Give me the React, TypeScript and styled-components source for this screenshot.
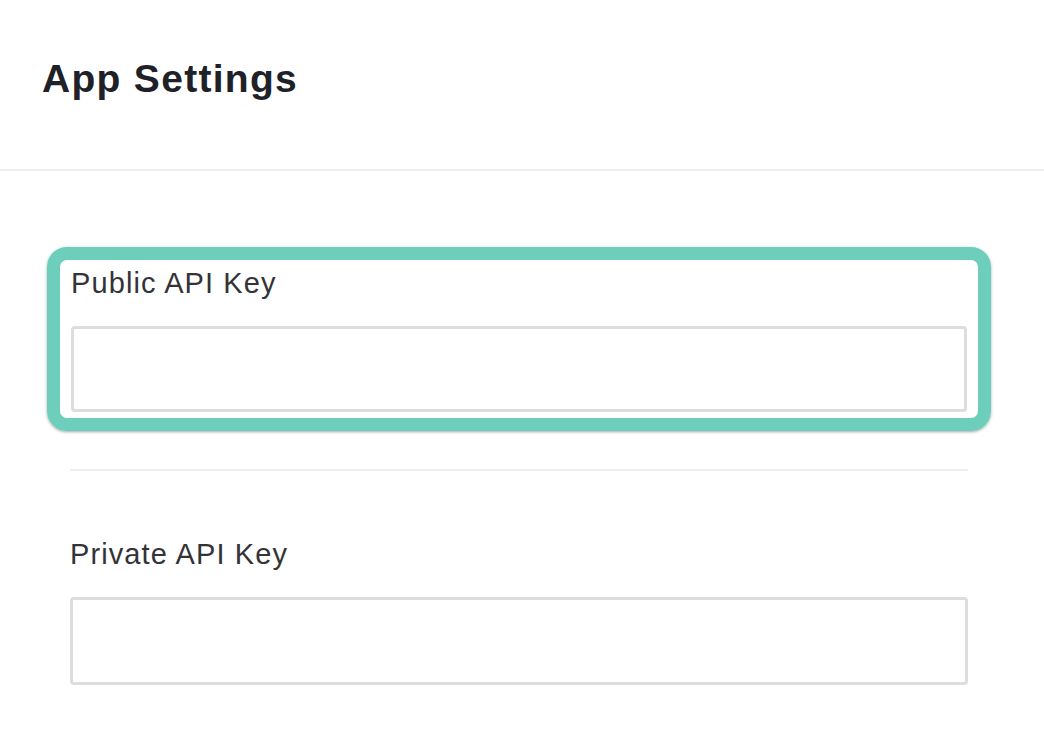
import React from "react";
import styled, { createGlobalStyle } from "styled-components";

const GlobalStyle = createGlobalStyle`
  html, body {
    margin: 0;
    padding: 0;
    background: #ffffff;
    font-family: "Liberation Sans", Arial, sans-serif;
  }
`;

const Page = styled.div`
  width: 1044px;
  min-height: 736px;
  background: #fff;
`;

const Header = styled.header`
  height: 171px;
  box-sizing: border-box;
  padding: 54px 0 0 42px;
  border-bottom: 2px solid #eeeeee;
`;

const Title = styled.h1`
  margin: 0;
  font-size: 39px;
  line-height: 50px;
  font-weight: 700;
  letter-spacing: 1.3px;
  color: #1f2128;
`;

const Content = styled.main`
  padding: 76px 76px 0 70px;
  display: flex;
  flex-direction: column;
`;

const Field = styled.div<{ $focused?: boolean }>`
  display: flex;
  flex-direction: column;
  gap: 26px;
  ${(p) =>
    p.$focused
      ? `
    margin: 0 -23px;
    padding: 6px 11px 6px 11px;
    border: 13px solid #6dcfbb;
    border-radius: 20px;
    box-shadow: 0 1px 3px rgba(0, 0, 0, 0.35);
  `
      : `
    padding: 0;
  `}
`;

const Label = styled.label`
  font-size: 29px;
  line-height: 34px;
  letter-spacing: 1.1px;
  color: #333338;
`;

const Input = styled.input<{ $tall?: boolean }>`
  box-sizing: border-box;
  width: 100%;
  height: ${(p) => (p.$tall ? "88px" : "86px")};
  border: 3px solid #dddddd;
  border-radius: 4px;
  background: #fff;
  outline: none;
  font-size: 28px;
  padding: 0 18px;
  font-family: inherit;
`;

const Divider = styled.hr`
  margin: 38px 0 66px;
  border: none;
  border-top: 2px solid #eeeeee;
`;

export default function App() {
  return (
    <Page>
      <GlobalStyle />
      <Header>
        <Title>App Settings</Title>
      </Header>
      <Content>
        <Field $focused>
          <Label>Public API Key</Label>
          <Input type="text" />
        </Field>
        <Divider />
        <Field>
          <Label>Private API Key</Label>
          <Input type="text" $tall />
        </Field>
      </Content>
    </Page>
  );
}
